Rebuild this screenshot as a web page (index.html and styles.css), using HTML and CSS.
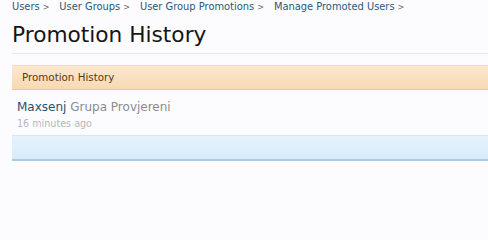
FILE: index.html
```html
<!DOCTYPE html>
<html>
<head>
<meta charset="utf-8">
<link rel="stylesheet" href="styles.css">
</head>
<body>
<div class="page">
  <nav class="crumbs">
    <span class="crumb"><a href="#">Users</a><span class="sep">&gt;</span></span>
    <span class="crumb"><a href="#">User Groups</a><span class="sep">&gt;</span></span>
    <span class="crumb"><a href="#">User Group Promotions</a><span class="sep">&gt;</span></span>
    <span class="crumb"><a href="#">Manage Promoted Users</a><span class="sep">&gt;</span></span>
  </nav>
  <h1 class="title">Promotion History</h1>
  <div class="list">
    <div class="list-head">Promotion History</div>
    <div class="row">
      <div class="row-main"><a href="#" class="user">Maxsenj</a> <span class="group">Grupa Provjereni</span></div>
      <div class="row-time">16 minutes ago</div>
    </div>
    <div class="list-foot"></div>
  </div>
</div>
</body>
</html>
```
FILE: styles.css
```css
html, body {
  margin: 0;
  padding: 0;
  background: #fcfcff;
}
body {
  font-family: "DejaVu Sans", Verdana, sans-serif;
}
.page {
  padding: 0 0 0 12px;
}
.crumbs {
  display: flex;
  font-size: 9.9px;
  line-height: 14px;
  padding-top: 0;
}
.crumb {
  margin-right: 10px;
}
.crumb a {
  color: #2b5777;
  text-decoration: none;
}
.sep {
  color: #666;
  margin-left: 3px;
  font-size: 8px;
}
.title {
  margin: 6px 0 0 0;
  font-size: 21.7px;
  line-height: 28px;
  font-weight: normal;
  color: #151515;
  padding-bottom: 4px;
  border-bottom: 1px solid #dfeaf2;
}
.list {
  margin-top: 11px;
}
.list-head {
  height: 23px;
  line-height: 23px;
  padding-left: 10px;
  font-size: 10.3px;
  color: #5a3a12;
  background: linear-gradient(#fbe8d0, #f9d9b2);
  border-top: 1px solid #f7dcbc;
  border-bottom: 1px solid #f3c48e;
}
.row {
  padding: 9px 5px 4px 5px;
}
.row-main {
  font-size: 12px;
  line-height: 16px;
}
.user {
  color: #2b4f6f;
  text-decoration: none;
}
.group {
  color: #8c8c8c;
}
.row-time {
  font-size: 9.6px;
  line-height: 14px;
  color: #b8b8b8;
  margin-top: 2px;
}
.list-foot {
  height: 23px;
  background: linear-gradient(#e5f2fc, #d9ebfa);
  border-top: 1px solid #d5e6f4;
  border-bottom: 2px solid #a9cbe6;
}
```
